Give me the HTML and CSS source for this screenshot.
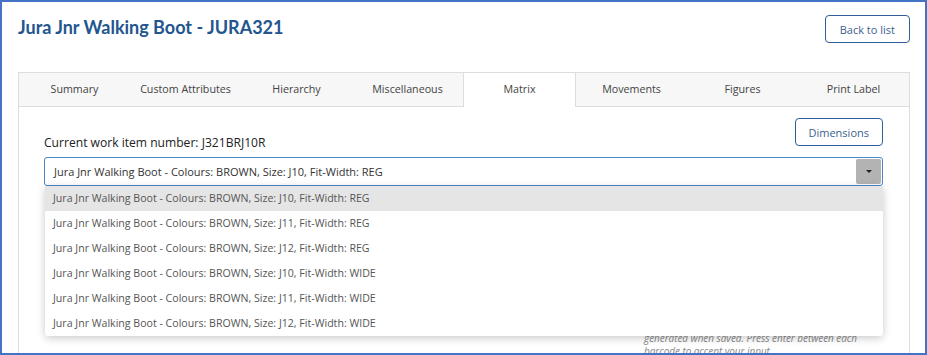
FILE: index.html
```html
<!DOCTYPE html>
<html lang="en">
<head>
  <meta charset="UTF-8" />
  <meta name="viewport" content="width=device-width, initial-scale=1.0"/>
  <title>Jura Jnr Walking Boot - JURA321</title>
  <link rel="stylesheet" href="styles.css">
</head>
<body>
  <div class="frame">
    <header class="page-head">
      <h1>Jura Jnr Walking Boot - JURA321</h1>
      <button class="btn">Back to list</button>
    </header>

    <div class="card">
      <ul class="tabs">
        <li>Summary</li>
        <li>Custom Attributes</li>
        <li>Hierarchy</li>
        <li>Miscellaneous</li>
        <li class="active">Matrix</li>
        <li>Movements</li>
        <li>Figures</li>
        <li>Print Label</li>
      </ul>

      <div class="card-body">
        <div class="toolbar">
          <span class="work-item">Current work item number: J321BRJ10R</span>
          <button class="btn">Dimensions</button>
        </div>

        <div class="combo">
          <div class="combo-input">
            <span class="combo-value">Jura Jnr Walking Boot - Colours: BROWN, Size: J10, Fit-Width: REG</span>
            <span class="caret-btn"><span class="caret"></span></span>
          </div>
          <ul class="combo-list">
            <li class="hover">Jura Jnr Walking Boot - Colours: BROWN, Size: J10, Fit-Width: REG</li>
            <li>Jura Jnr Walking Boot - Colours: BROWN, Size: J11, Fit-Width: REG</li>
            <li>Jura Jnr Walking Boot - Colours: BROWN, Size: J12, Fit-Width: REG</li>
            <li>Jura Jnr Walking Boot - Colours: BROWN, Size: J10, Fit-Width: WIDE</li>
            <li>Jura Jnr Walking Boot - Colours: BROWN, Size: J11, Fit-Width: WIDE</li>
            <li>Jura Jnr Walking Boot - Colours: BROWN, Size: J12, Fit-Width: WIDE</li>
          </ul>
        </div>

        <div class="barcode-row">
          <div class="barcode-field"></div>
          <p class="help">
            Barcodes for this item. If left blank, a<br>
            generated when saved. Press enter between each<br>
            barcode to accept your input.
          </p>
        </div>
      </div>
    </div>
  </div>
</body>
</html>
```

FILE: styles.css
```css
* {
  box-sizing: border-box;
}
body {
  margin: 0;
  font-family: 'Open Sans', sans-serif;
  color: #333;
  background: #fff;
}
.frame {
  width: 927px;
  height: 355px;
  border: 2px solid #4472c4;
  overflow: hidden;
}
.page-head {
  display: flex;
  justify-content: space-between;
  align-items: flex-start;
  padding: 13px 15px 0 16px;
}
h1 {
  margin: 0;
  font-family: 'Lato', sans-serif;
  font-size: 18px;
  line-height: 24px;
  font-weight: 700;
  color: #23558f;
}
.btn {
  font-family: 'Open Sans', sans-serif;
  font-size: 11px;
  color: #3d5f8f;
  background: #fff;
  border: 1px solid #2f5f98;
  border-radius: 4px;
  height: 28px;
  padding: 0 14px;
}
.card {
  margin: 29px 15px 0 16px;
  border: 1px solid #ddd;
  border-bottom: none;
  height: 300px;
}
.tabs {
  display: flex;
  list-style: none;
  margin: 0;
  padding: 0;
  background: #f7f7f7;
  border-bottom: 1px solid #ddd;
}
.tabs li {
  flex: 1;
  height: 33px;
  line-height: 33px;
  text-align: center;
  font-size: 10.7px;
  color: #444;
}
.tabs li.active {
  background: #fff;
  border-left: 1px solid #ddd;
  border-right: 1px solid #ddd;
  margin-bottom: -1px;
  height: 34px;
}
.card-body {
  padding: 11px 26px 0 25px;
}
.toolbar {
  display: flex;
  justify-content: space-between;
  align-items: flex-end;
}
.work-item {
  font-size: 12.1px;
  line-height: 16px;
  color: #222;
}
.toolbar .btn {
  margin-bottom: 5px;
  padding: 0 13px;
}
.combo {
  position: relative;
  margin-top: 6px;
}
.combo-input {
  display: flex;
  align-items: center;
  justify-content: space-between;
  height: 29px;
  border: 1px solid #4a86c8;
  border-radius: 3px;
  padding: 1px 1px 1px 9px;
}
.combo-value {
  font-size: 11px;
  color: #333;
}
.caret-btn {
  display: flex;
  align-items: center;
  justify-content: center;
  width: 25px;
  height: 25px;
  background: #b3b3b3;
  border-radius: 2px;
}
.caret {
  width: 0;
  height: 0;
  border-left: 3px solid transparent;
  border-right: 3px solid transparent;
  border-top: 3px solid #222;
}
.combo-list {
  position: absolute;
  top: 100%;
  left: 1px;
  right: 0;
  margin: 0;
  padding: 0;
  list-style: none;
  background: #fff;
  border-radius: 0 0 3px 3px;
  box-shadow: 0 2px 8px rgba(0, 0, 0, 0.22);
  z-index: 5;
}
.combo-list li {
  height: 25px;
  line-height: 25px;
  padding-left: 8px;
  font-size: 10.6px;
  color: #555;
}
.combo-list li.hover {
  background: #e5e5e5;
}
.barcode-row {
  display: grid;
  grid-template-columns: 1fr 239px;
  margin-top: 133px;
}
.help {
  margin: 0;
  font-size: 9.9px;
  line-height: 13px;
  font-style: italic;
  white-space: nowrap;
  color: #888;
}
```
